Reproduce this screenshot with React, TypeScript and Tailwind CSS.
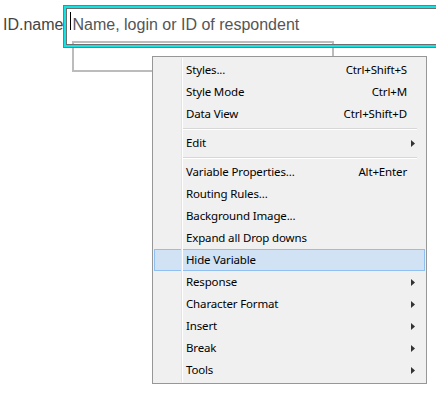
type Item =
  | { kind: "item"; label: string; shortcut?: string; submenu?: boolean; active?: boolean }
  | { kind: "sep" };

const items: Item[] = [
  { kind: "item", label: "Styles...", shortcut: "Ctrl+Shift+S" },
  { kind: "item", label: "Style Mode", shortcut: "Ctrl+M" },
  { kind: "item", label: "Data View", shortcut: "Ctrl+Shift+D" },
  { kind: "sep" },
  { kind: "item", label: "Edit", submenu: true },
  { kind: "sep" },
  { kind: "item", label: "Variable Properties...", shortcut: "Alt+Enter" },
  { kind: "item", label: "Routing Rules..." },
  { kind: "item", label: "Background Image..." },
  { kind: "item", label: "Expand all Drop downs" },
  { kind: "item", label: "Hide Variable", active: true },
  { kind: "item", label: "Response", submenu: true },
  { kind: "item", label: "Character Format", submenu: true },
  { kind: "item", label: "Insert", submenu: true },
  { kind: "item", label: "Break", submenu: true },
  { kind: "item", label: "Tools", submenu: true },
];

function Arrow() {
  return (
    <svg width="4" height="7" viewBox="0 0 4 7" className="block">
      <path d="M0 0 L4 3.5 L0 7 Z" fill="#333" />
    </svg>
  );
}

function ContextMenu() {
  return (
    <div className="absolute left-[152px] top-[56px] z-20 w-[275px] h-[328px] border border-[#979797] bg-[#f0f0f0] px-[1px] py-[2px] font-['Noto_Sans',sans-serif] text-[11.5px] tracking-[-0.15px] text-black">
      {/* icon column divider */}
      <div className="absolute left-[28px] top-[1px] bottom-[1px] w-[1px] bg-[#e2e3e3] z-10" />
      <div className="absolute left-[29px] top-[1px] bottom-[1px] w-[1px] bg-white z-10" />

      {items.map((it, i) =>
        it.kind === "sep" ? (
          <div key={i} className="h-[7px] flex items-center ml-[28px] mr-[8px]">
            <div className="w-full">
              <div className="h-[1px] bg-[#d7d7d7]" />
              <div className="h-[1px] bg-white" />
            </div>
          </div>
        ) : (
          <div
            key={i}
            className={
              it.active
                ? "h-[22px] flex items-center border border-[#90c0f0] bg-[#d0e2f4] pl-[31px] pr-[9px]"
                : "h-[22px] flex items-center border border-transparent pl-[31px] pr-[9px]"
            }
          >
            <span className="flex-1 leading-none">{it.label}</span>
            {it.shortcut && <span className="leading-none">{it.shortcut}</span>}
            <span className="ml-[4px] w-[4px] flex items-center">{it.submenu && <Arrow />}</span>
          </div>
        )
      )}
    </div>
  );
}

export default function App() {
  return (
    <div className="relative w-[436px] h-[394px] overflow-hidden bg-white font-['Liberation_Sans',Arial,sans-serif]">
      {/* bracket outline behind the field */}
      <div className="absolute left-[72px] top-[41px] w-[262px] h-[31px] border-2 border-[#bcbcbc] z-0" />

      <div className="relative z-10 flex items-start pt-[5px]">
        <div className="pl-[3px] pt-[11px] w-[65px] text-[16px] text-[#444] leading-[18px]">ID.name</div>
        <div className="w-[400px] h-[43px] border border-[#7a7a7a] shrink-0">
          <div className="h-full border-2 border-[#12e3e3]">
            <div className="h-full border border-[#6e6e6e] flex items-start pl-[3px] pt-[3px]">
              <span className="w-[1px] h-[18px] bg-black mr-[1px]" />
              <span className="text-[16px] text-[#555] leading-[18px] mt-[4px]">Name, login or ID of respondent</span>
            </div>
          </div>
        </div>
      </div>

      <ContextMenu />
    </div>
  );
}
